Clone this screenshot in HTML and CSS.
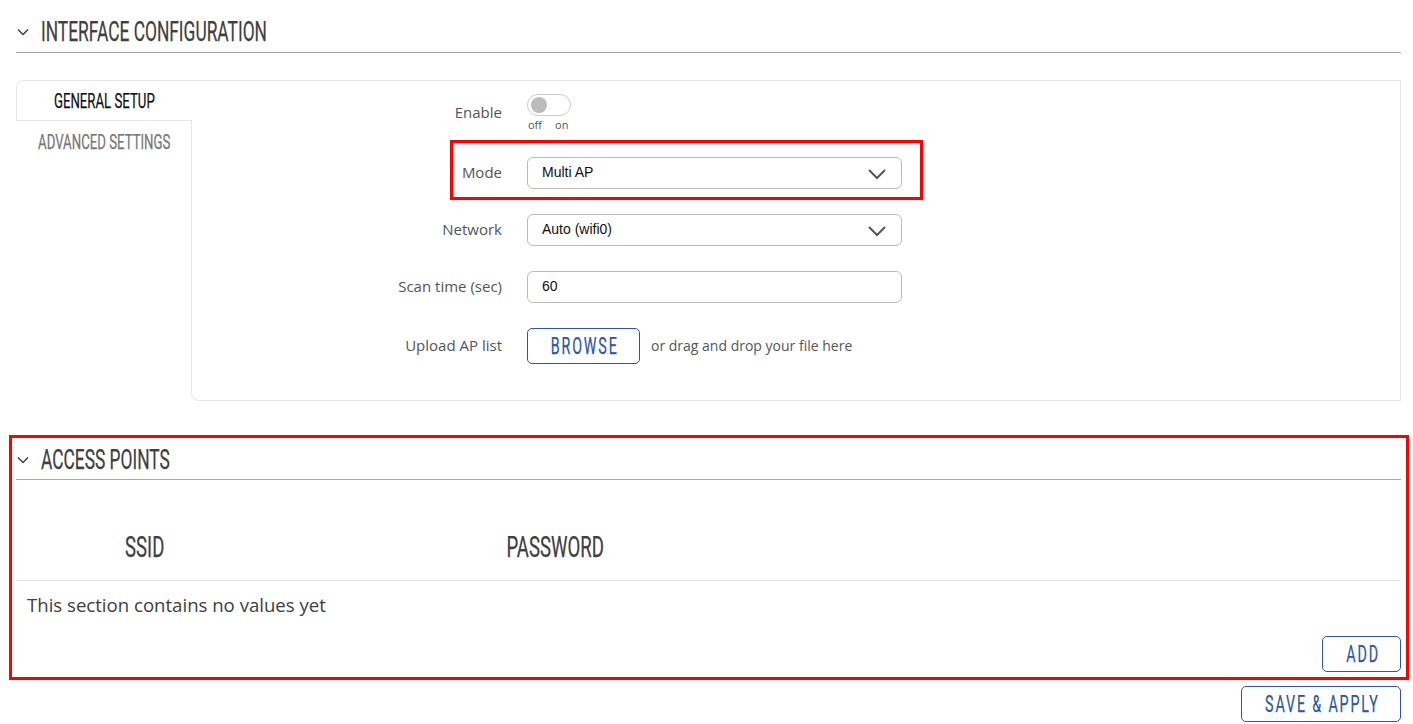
FILE: index.html
```html
<!DOCTYPE html>
<html lang="en">
<head>
    <meta charset="UTF-8">
    <meta name="viewport" content="width=device-width, initial-scale=1.0">
    <title>Interface configuration</title>
    <link rel="stylesheet" href="styles.css">
</head>
<body>
<div class="page">

    <div class="section-title">
        <svg class="chev" width="12" height="8" viewBox="0 0 12 8"><path d="M1 1.5 L6 6.5 L11 1.5" fill="none" stroke="#404040" stroke-width="1.5"/></svg>
        <h2><span class="cond">INTERFACE CONFIGURATION</span></h2>
    </div>

    <div class="tabs-wrap">
        <div class="tabs">
            <div class="tab active"><span class="cond">GENERAL SETUP</span></div>
            <div class="tab"><span class="cond">ADVANCED SETTINGS</span></div>
        </div>
        <div class="panel">
            <div class="row row-enable">
                <label class="lbl">Enable</label>
                <div class="ctrl">
                    <div class="toggle"><span class="knob"></span></div>
                    <div class="toggle-txt"><span>off</span><span>on</span></div>
                </div>
            </div>
            <div class="row marked">
                <label class="lbl">Mode</label>
                <div class="ctrl">
                    <div class="select">Multi AP
                        <svg width="20" height="12" viewBox="0 0 20 12"><path d="M2 2 L10 10 L18 2" fill="none" stroke="#555" stroke-width="2"/></svg>
                    </div>
                </div>
                <span class="highlight"></span>
            </div>
            <div class="row">
                <label class="lbl">Network</label>
                <div class="ctrl">
                    <div class="select">Auto (wifi0)
                        <svg width="20" height="12" viewBox="0 0 20 12"><path d="M2 2 L10 10 L18 2" fill="none" stroke="#555" stroke-width="2"/></svg>
                    </div>
                </div>
            </div>
            <div class="row">
                <label class="lbl">Scan time (sec)</label>
                <div class="ctrl">
                    <div class="input">60</div>
                </div>
            </div>
            <div class="row row-upload">
                <label class="lbl">Upload AP list</label>
                <div class="ctrl upload">
                    <button class="btn browse"><span class="cond">BROWSE</span></button>
                    <span class="drop">or drag and drop your file here</span>
                </div>
            </div>
        </div>
    </div>

    <div class="red-box">
        <div class="section-title">
            <svg class="chev" width="12" height="8" viewBox="0 0 12 8"><path d="M1 1.5 L6 6.5 L11 1.5" fill="none" stroke="#404040" stroke-width="1.5"/></svg>
            <h2><span class="cond">ACCESS POINTS</span></h2>
        </div>
        <div class="table-head">
            <div class="th"><span class="cond">SSID</span></div>
            <div class="th"><span class="cond">PASSWORD</span></div>
        </div>
        <p class="empty">This section contains no values yet</p>
        <div class="actions">
            <button class="btn add"><span class="cond">ADD</span></button>
        </div>
    </div>

    <div class="actions save">
        <button class="btn"><span class="cond">SAVE &amp; APPLY</span></button>
    </div>

</div>
</body>
</html>
```

FILE: styles.css
```css
*{
    margin: 0px;
    padding: 0px;
    box-sizing: border-box;
}
body{
    background: #fff;
    font-family: "Open Sans", "Liberation Sans", sans-serif;
    color: #555;
}
.page{
    padding: 0px 12px 0px 16px;
}

/* narrow headline text (no condensed font installed, so squeeze Roboto) */
.cond{
    display: inline-block;
    font-family: Roboto, "Liberation Sans", sans-serif;
    font-weight: normal;
    transform: scaleX(0.62);
    transform-origin: center;
    white-space: nowrap;
    -webkit-text-stroke: 0.25px currentColor;
}

.section-title{
    display: flex;
    align-items: center;
    height: 53px;
    border-bottom: 1px solid #aaa;
    padding-top: 10px;
}
.chev{
    margin: 2px 12px 0px 1px;
}
.section-title h2{
    font-weight: normal;
    font-size: 28px;
    color: #404040;
    line-height: 1;
}
.section-title .cond{
    transform-origin: left center;
}

/* tabs + panel */
.tabs-wrap{
    display: flex;
    margin-top: 27px;
}
.tabs{
    width: 175px;
    display: flex;
    flex-direction: column;
}
.tab{
    height: 41px;
    display: flex;
    align-items: center;
    justify-content: center;
    font-size: 20px;
    color: #777;
    padding-left: 2px;
}
.tab .cond{
    transform: scaleX(0.66);
}
.tab.active{
    color: #111;
    background: #fff;
    border: 1px solid #e6e6e6;
    border-right: none;
    border-radius: 8px 0px 0px 0px;
    margin-right: -1px;
    position: relative;
    z-index: 1;
    padding-left: 0px;
}
.panel{
    flex: 1;
    border: 1px solid #e6e6e6;
    border-radius: 0px 0px 0px 8px;
    padding: 13px 0px 36px 0px;
    display: flex;
    flex-direction: column;
    gap: 25px;
    min-height: 320px;
}
.row{
    display: flex;
    align-items: center;
    position: relative;
}
.lbl{
    width: 310px;
    text-align: right;
    font-size: 15px;
    color: #555;
    margin-top: -2px;
}
.ctrl{
    margin-left: 25px;
}
.row-enable{
    align-items: flex-start;
}
.row-enable .lbl{
    padding-top: 8px;
    margin-top: 0px;
}
.toggle{
    width: 44px;
    height: 22px;
    border: 1px solid #ccc;
    border-radius: 11px;
    padding: 2px 3px;
}
.knob{
    display: block;
    width: 16px;
    height: 16px;
    border-radius: 50%;
    background: #bbb;
}
.toggle-txt{
    display: flex;
    gap: 13px;
    font-size: 11px;
    color: #555;
    padding-left: 1px;
    margin-top: 1px;
}
.select, .input{
    width: 375px;
    height: 32px;
    border: 1px solid #bbb;
    border-radius: 6px;
    display: flex;
    align-items: center;
    justify-content: space-between;
    padding: 0px 14px 2px 14px;
    font-family: "Liberation Sans", Arial, sans-serif;
    font-size: 14px;
    color: #111;
}
.select svg{
    margin-top: 4px;
}
.highlight{
    position: absolute;
    left: 258px;
    width: 473px;
    top: -17px;
    bottom: -11px;
    border: 3px solid #f00;
}
.upload{
    display: flex;
    align-items: center;
    gap: 11px;
}
.btn{
    background: #fff;
    border: 1px solid #2b57a5;
    border-radius: 5px;
    color: #2b57a5;
    font-size: 23px;
    letter-spacing: 3px;
    height: 36px;
    padding: 0px;
    display: flex;
    align-items: center;
    justify-content: center;
}
.btn .cond{
    margin-right: -3px;
}
.browse{
    width: 113px;
}
.drop{
    font-size: 14px;
    color: #555;
    margin-top: -2px;
}

/* access points */
.red-box{
    margin: 34px -8px 0px -7px;
    border: 3px solid #f00;
    padding: 0px 5px 5px 4px;
}
.red-box .section-title{
    height: 42px;
    padding-top: 0px;
}
.table-head{
    display: grid;
    grid-template-columns: 258px 562px 1fr;
    height: 101px;
    align-items: center;
    border-bottom: 1px solid #e6e6e6;
    padding-top: 30px;
}
.th{
    font-size: 29px;
    color: #404040;
    text-align: center;
}
.th .cond{
    transform: scaleX(0.64);
}
.empty{
    font-size: 18.6px;
    color: #404040;
    padding: 11px 0px 0px 11px;
}
.actions{
    display: flex;
    justify-content: flex-end;
}
.red-box .actions{
    margin-top: 19px;
}
.add{
    width: 79px;
}
.save{
    margin-top: 6px;
}
.save .btn{
    width: 160px;
}
```
